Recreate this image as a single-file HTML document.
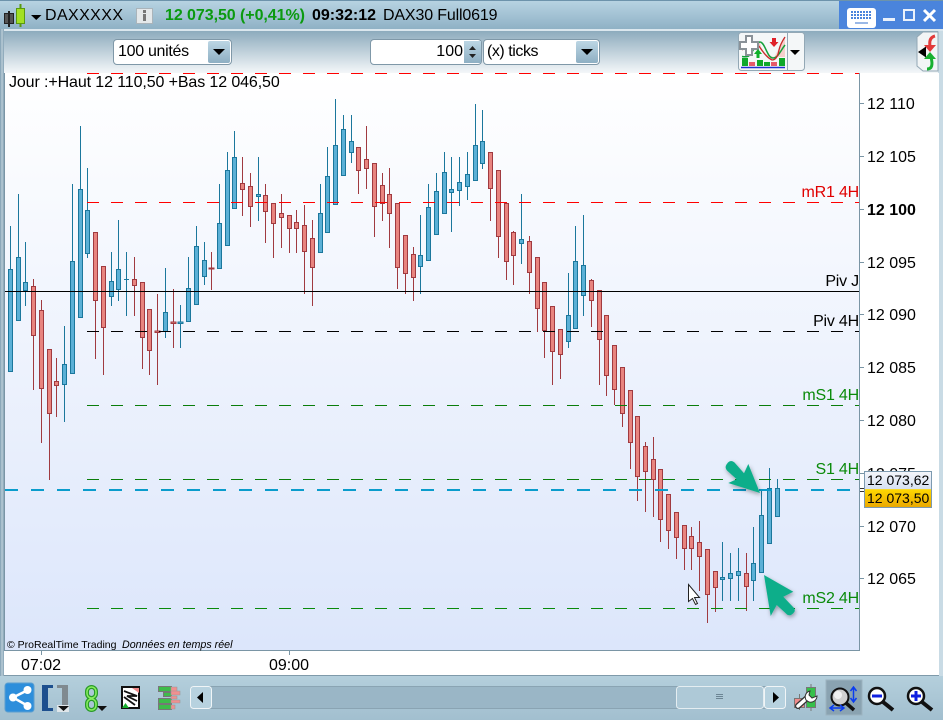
<!DOCTYPE html>
<html><head><meta charset="utf-8">
<style>
*{box-sizing:border-box}
html,body{margin:0;padding:0;width:943px;height:720px;overflow:hidden;background:#a9c5d4;font-family:"Liberation Sans",sans-serif;color:#000}
.a{position:absolute;white-space:nowrap}
#title{left:0;top:0;width:943px;height:29px;background:linear-gradient(#b7d3e2,#8fb1c5);border-top:1px solid #6d93ab}
#sep{left:0;top:29px;width:943px;height:2px;background:#dbe7ee}
#tb{left:0;top:31px;width:938px;height:42px;background:linear-gradient(#8dabbd,#f4f7f9)}
#lb{left:0;top:29px;width:4px;height:650px;background:linear-gradient(90deg,#7d9db0,#b9ccd7 50%,#84a2b4)}
#rb{left:938px;top:31px;width:5px;height:650px;background:#c9dbe5}
#white{left:4px;top:73px;width:935px;height:603px;background:#fff;border-bottom:1px solid #7f9aaa}
#chart{left:4px;top:73px;width:856px;height:578px;background:linear-gradient(#fff,#dce6fb);border-left:1px solid #7a95a5;border-right:1px solid #7a95a5;border-bottom:1px solid #7a95a5}
#bot{left:0;top:676px;width:943px;height:44px;background:linear-gradient(#b4cfdc,#a2bfcf)}
.t{font-size:16px;line-height:18px}
.p{left:867px;font-size:16px;line-height:18px}
.l{font-size:16px;line-height:18px;right:84px;letter-spacing:-.2px}
.box{background:#fff;border:1px solid #7f98a8;border-radius:4px;height:26px;top:39px;font-size:16px;line-height:24px}
.btn{width:22px;height:22px;top:41px;background:linear-gradient(#bcd6e4,#8eafc3);border-radius:2px}
.btn:after{content:"";position:absolute;left:5px;top:8px;border-left:6px solid transparent;border-right:6px solid transparent;border-top:6px solid #000}
</style></head><body>
<div class="a" id="title"></div>
<div class="a" id="sep"></div>
<div class="a" id="tb"></div>
<div class="a" id="rb"></div>
<div class="a" id="white"></div>
<div class="a" id="chart"></div>
<div class="a" id="lb"></div>
<div class="a" id="bot"></div>

<div class="a" style="left:839px;top:1px;width:104px;height:28px;background:#4a84dc"></div>
<svg class="a" style="left:0;top:0" width="943" height="30">
<rect x="4.500" y="13.500" width="9" height="10" fill="#555" stroke="#222"/><path d="M9 11v16" stroke="#222" stroke-width="2"/>
<rect x="16.500" y="8.500" width="8" height="15" fill="#a2e024" stroke="#5a9a10"/><path d="M20.500 4v4M20.500 24v3" stroke="#5a9a10" stroke-width="2"/>
<path d="M31 15h10.500l-5.250 5z"/>
<rect x="136.500" y="8.500" width="16" height="15" fill="#e4e8ea" stroke="#aab4ba"/>
<rect x="143" y="10" width="3" height="3" fill="#777"/><rect x="143" y="14" width="3" height="7" fill="#777"/>
<rect x="847" y="8" width="29" height="20" rx="3" fill="#fff"/>
<path d="M851 12h21M851 15h21M851 18h21" stroke="#4a84dc" stroke-width="2" stroke-dasharray="2 1"/><rect x="855" y="22" width="13" height="2" fill="#9ab8e6"/>
<rect x="883" y="18" width="12" height="3" fill="#eaf1fb"/>
<rect x="904" y="10" width="10" height="10" fill="none" stroke="#eaf1fb" stroke-width="2"/>
<path d="M924 10l11 11M935 10l-11 11" stroke="#fff" stroke-width="3"/>
</svg>
<div class="a t" style="left:45px;top:7px;letter-spacing:.4px">DAXXXXX</div>
<div class="a t" style="left:165px;top:7px;font-weight:bold;color:#0b9a10;letter-spacing:-.06px">12 073,50 (+0,41%)</div>
<div class="a t" style="left:312px;top:7px;font-weight:bold">09:32:12</div>
<div class="a t" style="left:383px;top:7px;letter-spacing:-.15px">DAX30 Full0619</div>

<div class="a box" style="left:113px;width:119px;padding-left:4px;letter-spacing:-.3px">100 unités</div><div class="a btn" style="left:208px"></div>
<div class="a box" style="left:370px;width:112px;text-align:right;padding-right:18px">100</div>
<div class="a" style="left:464px;top:41px;width:17px;height:22px;background:linear-gradient(#bcd6e4,#8eafc3)"></div>
<svg class="a" style="left:464px;top:41px" width="17" height="22"><path d="M5 9l3.500-4 3.500 4zM5 13l3.500 4 3.500-4z" fill="#222"/></svg>
<div class="a box" style="left:483px;width:117px;padding-left:3px;letter-spacing:-.45px">(x) ticks</div><div class="a btn" style="left:576px"></div>

<svg class="a" style="left:736px;top:31px" width="72" height="42">
<rect x="2.500" y="1.500" width="66" height="38" rx="3" fill="#f4f7f8" stroke="#93a8b5"/><path d="M51.500 1.500v38" stroke="#93a8b5"/>
<path d="M17 11C24 14 28 22 33 27c4 2 5 0 9-8l7-13v20H38C30 24 26 22 24 11z" fill="#f5cfcc"/>
<path d="M6 25.500C10 26 12 26 14 24 18 19 20 11 24 11c5 0 7 16 13 16 5 0 8-8 12-13" fill="none" stroke="#14a03a" stroke-width="1.500"/>
<path d="M6 19C10 15 13 11 17 11c6 0 10 14 19 18 4 0 6-4 7-10 1-5 4-10 6-13" fill="none" stroke="#c82a2a" stroke-width="1.300"/>
<path d="M4 11h6V5h6v6h6v7h-6v6h-6v-6H4z" fill="#fff" stroke="#8a9298" stroke-width="2"/>
<path d="M36 7h4v4h2.500L38 16l-4.500-5H36z" fill="#e0222a"/>
<path d="M20.500 27v-4H18l4-5 4 5h-2.500v4z" fill="#0fb02a"/>
<path d="M6 27h6v8H6zM21 29h6v6h-6zM28 31h6v4h-6zM43 27h6v8h-6z" fill="#0fa82a"/>
<path d="M13 31h6v4h-6zM35 31h6v4h-6z" fill="#e65a6a"/>
<path d="M5 36.500h44" stroke="#2030d0" stroke-width="1.500"/>
<path d="M54 19h10l-5 5z"/>
</svg>
<svg class="a" style="left:913px;top:31px" width="26" height="42">
<path d="M25 1H10L4 6v29l6 5h15z" fill="#f2f5f6" stroke="#93a8b5"/>
<path d="M22 5c-4 1-6 4-5 10" fill="none" stroke="#e23a3a" stroke-width="3"/><path d="M11 14h12l-6 7z" fill="#e23a3a"/>
<path d="M14 38c5 0 6-4 4-12" fill="none" stroke="#18b030" stroke-width="3"/><path d="M11 28l6-7 6 7z" fill="#18b030"/>
<path d="M5 21l8-5.500v11z"/>
</svg>

<svg class="a" style="left:0;top:0" width="943" height="720" shape-rendering="crispEdges">
<path fill="none" stroke="#1b779c" d="M10.500 226V371M18.500 194V320M25.500 242V306M64.500 326V422M72.500 184V373M80.500 126V317M87.500 168V258M111.500 252V306M118.500 220V301M126.500 252V316M165.500 268V338M180.500 305V348M188.500 257V321M196.500 226V304M204.500 242V285M219.500 184V268M227.500 152V245M234.500 131V208M258.500 157V221M320.500 184V252M327.500 147V232M335.500 99V204M343.500 115V175M351.500 115V163M420.500 215V294M428.500 184V260M436.500 173V234M444.500 152V213M451.500 157V232M459.500 157V206M467.500 152V200M475.500 104V180M482.500 110V169M521.500 194V264M568.500 273V348M575.500 226V328M583.500 215V316M722.500 542V601M730.500 553V601M738.500 548V601M753.500 527V601M761.500 490V572M769.500 468V543M777.500 479V516"/>
<path fill="#5bb0d6" stroke="#1b779c" d="M8.500 269.500h4V371.500h-4zM16.500 257.500h4V320.500h-4zM23.500 282.500h4V290.500h-4zM62.500 364.500h4V384.500h-4zM70.500 261.500h4V373.500h-4zM78.500 189.500h4V317.500h-4zM85.500 210.500h4V253.500h-4zM109.500 281.500h4V296.500h-4zM116.500 269.500h4V289.500h-4zM124 279.500h5M163.500 312.500h4V331.500h-4zM178 322h5v1.500h-5zM186.500 288.500h4V321.500h-4zM194.500 246.500h4V304.500h-4zM202.500 260.500h4V276.500h-4zM217.500 223.500h4V268.500h-4zM225.500 170.500h4V245.500h-4zM232.500 157.500h4V208.500h-4zM256.500 194.500h4V196.500h-4zM318.500 213.500h4V252.500h-4zM325.500 176.500h4V232.500h-4zM333.500 145.500h4V204.500h-4zM341.500 129.500h4V175.500h-4zM349.500 141.500h4V152.500h-4zM418.500 255.500h4V266.500h-4zM426.500 207.500h4V260.500h-4zM434.500 191.500h4V234.500h-4zM442.500 172.500h4V213.500h-4zM449.500 189.500h4V192.500h-4zM457.500 182.500h4V190.500h-4zM465.500 174.500h4V186.500h-4zM473.500 145.500h4V180.500h-4zM480.500 141.500h4V163.500h-4zM519.500 239.500h4V243.500h-4zM566.500 315.500h4V341.500h-4zM573.500 261.500h4V328.500h-4zM581.500 265.500h4V295.500h-4zM720.500 577.500h4V579.500h-4zM728.500 573.500h4V578.500h-4zM736.500 571.500h4V575.500h-4zM751.500 563.500h4V580.500h-4zM759.500 515.500h4V572.500h-4zM767.500 488.500h4V543.500h-4zM775.500 488.500h4V516.500h-4z"/>
<path fill="none" stroke="#a03a40" d="M33.500 279V390M41.500 300V443M49.500 349V480M56.500 358V417M95.500 232V359M103.500 266V375M134.500 257V316M142.500 282V369M149.500 309V375M157.500 294V385M173.500 289V348M211.500 252V290M242.500 157V216M250.500 173V227M265.500 184V243M273.500 203V258M281.500 194V248M289.500 215V253M296.500 210V253M304.500 205V294M312.500 220V306M358.500 147V194M366.500 126V189M374.500 163V237M382.500 173V221M389.500 168V248M397.500 203V289M405.500 235V294M413.500 247V301M490.500 152V221M498.500 170V258M506.500 203V280M513.500 231V285M529.500 236V294M537.500 257V332M544.500 282V358M552.500 306V385M560.500 329V379M591.500 279V327M599.500 290V385M606.500 315V396M614.500 345V405M622.500 367V427M630.500 390V469M637.500 416V501M645.500 442V512M653.500 437V517M660.500 469V542M668.500 494V549M676.500 512V559M684.500 525V570M691.500 527V570M699.500 521V591M707.500 549V623M715.500 571V612M746.500 553V611"/>
<path fill="#e8847f" stroke="#a03a40" d="M31.500 286.500h4V335.500h-4zM39.500 310.500h4V388.500h-4zM47.500 349.500h4V413.500h-4zM54.500 381.500h4V385.500h-4zM93.500 232.500h4V300.500h-4zM101.500 266.500h4V327.500h-4zM132.500 279.500h4V285.500h-4zM140.500 282.500h4V337.500h-4zM147.500 309.500h4V350.500h-4zM155 331h5v1.500h-5zM171 322h5v1.500h-5zM209 268h5v1h-5zM240.500 183.500h4V189.500h-4zM248.500 186.500h4V206.500h-4zM263.500 195.500h4V211.500h-4zM271.500 203.500h4V223.500h-4zM279.500 213.500h4V217.500h-4zM287.500 215.500h4V228.500h-4zM294.500 222.500h4V228.500h-4zM302.500 225.500h4V251.500h-4zM310.500 238.500h4V267.500h-4zM356.500 147.500h4V170.500h-4zM364.500 159.500h4V168.500h-4zM372.500 163.500h4V206.500h-4zM380.500 185.500h4V203.500h-4zM387.500 194.500h4V213.500h-4zM395.500 203.500h4V267.500h-4zM403.500 235.500h4V273.500h-4zM411.500 254.500h4V277.500h-4zM488.500 152.500h4V188.500h-4zM496.500 170.500h4V236.500h-4zM504.500 203.500h4V261.500h-4zM511.500 232.500h4V255.500h-4zM527.500 241.500h4V272.500h-4zM535.500 257.500h4V308.500h-4zM542.500 282.500h4V330.500h-4zM550.500 306.500h4V351.500h-4zM558.500 329.500h4V354.500h-4zM589.500 280.500h4V300.500h-4zM597.500 290.500h4V339.500h-4zM604.500 315.500h4V375.500h-4zM612.500 345.500h4V389.500h-4zM620.500 367.500h4V413.500h-4zM628.500 390.500h4V442.500h-4zM635.500 416.500h4V476.500h-4zM643.500 446.500h4V471.500h-4zM651.500 459.500h4V479.500h-4zM658.500 469.500h4V519.500h-4zM666.500 494.500h4V530.500h-4zM674.500 512.500h4V537.500h-4zM682.500 525.500h4V548.500h-4zM689.500 536.500h4V548.500h-4zM697.500 542.500h4V556.500h-4zM705.500 549.500h4V594.500h-4zM713.500 571.500h4V587.500h-4zM744.500 573.500h4V586.500h-4z"/>
<path d="M87 73.500H859" stroke="#f00" stroke-dasharray="12 12"/>
<path d="M87 202.500H859" stroke="#f00" stroke-dasharray="12 12"/>
<path d="M5 291.500H859" stroke="#000"/>
<path d="M87 331.500H859" stroke="#000" stroke-dasharray="12 12"/>
<path d="M87 405.500H859" stroke="#0a7d0a" stroke-dasharray="12 12"/>
<path d="M87 479.500H859" stroke="#0a7d0a" stroke-dasharray="12 12"/>
<path d="M87 608.500H859" stroke="#0a8a0a" stroke-dasharray="12 12"/>
<path d="M5 490H859" stroke="#0a9ccc" stroke-width="2" stroke-dasharray="13 13"/>
<path d="M860 103.500h4M860 156.500h4M860 209.500h4M860 262.500h4M860 314.500h4M860 367.500h4M860 420.500h4M860 473.500h4M860 526.500h4M860 578.500h4M41.500 651v4M289.500 651v4" stroke="#7a95a5"/>
<path d="M860 488.500h5M860 491.500h5" stroke="#333"/>
</svg>

<svg class="a" style="left:680px;top:455px" width="130" height="175">
<defs><filter id="s" x="-30%" y="-30%" width="160%" height="160%"><feDropShadow dx="1" dy="2" stdDeviation="2" flood-color="#000" flood-opacity=".35"/></filter></defs>
<path d="M8.500 129.500v17l4-3 3 6 2-1-3-6h5z" fill="#fff" stroke="#222" stroke-width="1"/>
<g filter="url(#s)" fill="#0bae8a">
<path d="M80 38L68.300 9 64 18.300 54.500 7.500Q51 4.500 48 7.500L46.500 9.500Q44.500 12.500 47 15.500L56.700 24.300 48.300 28z"/>
<path d="M84 120L113.300 136.700 103.300 141.700 114 153Q116 156 113 158.500L111 160Q108 161 106 158.500L96.700 150 90.700 161z"/>
</g>
</svg>

<div class="a t" style="left:9px;top:74px;letter-spacing:-.11px">Jour :+Haut 12 110,50 +Bas 12 046,50</div>
<div class="a" style="left:7px;top:639px;font-size:10.500px;line-height:13px">© ProRealTime Trading</div>
<div class="a" style="left:122px;top:639px;font-size:10.700px;line-height:13px;font-style:italic">Données en temps réel</div>
<div class="a l" style="top:184px;color:#e00000">mR1 4H</div>
<div class="a l" style="top:273px">Piv J</div>
<div class="a l" style="top:313px">Piv 4H</div>
<div class="a l" style="top:387px;color:#0a8a0a">mS1 4H</div>
<div class="a l" style="top:461px;color:#0a8a0a">S1 4H</div>
<div class="a l" style="top:590px;color:#0a8a0a">mS2 4H</div>
<div class="a p" style="top:96px">12 110</div>
<div class="a p" style="top:149px">12 105</div>
<div class="a p" style="top:202px;font-weight:bold">12 100</div>
<div class="a p" style="top:255px">12 095</div>
<div class="a p" style="top:307px">12 090</div>
<div class="a p" style="top:360px">12 085</div>
<div class="a p" style="top:413px">12 080</div>
<div class="a p" style="top:466px">12 075</div>
<div class="a p" style="top:519px">12 070</div>
<div class="a p" style="top:571px">12 065</div>
<div class="a" style="left:864px;top:471px;width:68px;height:37px;border:1px solid #7d9ab0;background:linear-gradient(#f4f6fb,#d6e0f2 48%,#ffd800 50%,#eaa800);font-size:14px;line-height:17.500px;padding-left:2px"><div>12 073,62</div><div>12 073,50</div></div>
<div class="a t" style="left:21px;top:657px">07:02</div>
<div class="a t" style="left:269px;top:657px">09:00</div>

<svg class="a" style="left:0;top:676px" width="943" height="44">
<rect x="5" y="7" width="29" height="29" rx="3" fill="#2d8edb" stroke="#5a9ed0"/>
<path d="M28 14L13 21.500 28 30" fill="none" stroke="#fff" stroke-width="2.500"/><circle cx="27.500" cy="14" r="4" fill="#fff"/><circle cx="13" cy="21.500" r="4" fill="#fff"/><circle cx="27.500" cy="30" r="4" fill="#fff"/>
<path d="M53 9H42v26h11v-3h-5V12h5z" fill="#1d4f8e"/>
<path d="M57 9h11v26H57v-3h5V12h-5z" fill="#808a90"/>
<rect x="57" y="29" width="12" height="7" fill="#dfe6ea"/><path d="M58 30h11l-5.500 5z" fill="#111"/>
<g fill="none"><rect x="87" y="11" width="9" height="11" rx="4.500" stroke="#2a9a2a" stroke-width="4"/><rect x="87" y="23" width="9" height="11" rx="4.500" stroke="#2a9a2a" stroke-width="4"/><rect x="87" y="11" width="9" height="11" rx="4.500" stroke="#8af060" stroke-width="1.500"/><rect x="87" y="23" width="9" height="11" rx="4.500" stroke="#8af060" stroke-width="1.500"/></g>
<path d="M97 30h10l-5 5z" fill="#111"/>
<rect x="122" y="11" width="17" height="21" fill="#fff" stroke="#111" stroke-width="2"/>
<path d="M124 15l13 5-10 0 10 5M124 21l11 8" fill="none" stroke="#111" stroke-width="1.800"/>
<path d="M132 12h7v5z" fill="#ef8a8a"/><path d="M122 32h7l-3.500-5z" fill="#18b030"/>
<path d="M158.500 10.500h13v5h-13zM163.500 16.500h8v4h-8zM158.500 22.500h13v5h-13zM158.500 28.500h13v5h-13z" fill="#3ebc4a" stroke="#777" stroke-width="1"/>
<path d="M171 11h6v4h-6zM171 15h9v4h-9zM171 20h6v3h-6zM171 24h9v3h-9zM171 29h4v4h-4z" fill="#f09090" stroke="#999" stroke-width=".600"/>
<rect x="190.500" y="10.500" width="595" height="22" rx="3" fill="#9ab6c6" stroke="#8aa4b3"/>
<rect x="190.500" y="10.500" width="21" height="22" rx="3" fill="#b7d2df" stroke="#f0f5f7"/>
<path d="M203 16v11l-6-5.500z"/>
<rect x="676.500" y="10.500" width="87" height="22" rx="3" fill="#aec9d7" stroke="#e4edf1"/>
<path d="M716 18.500h7M716 20.500h7M716 22.500h7" stroke="#6c8594"/>
<rect x="764.500" y="10.500" width="21" height="22" rx="3" fill="#b7d2df" stroke="#f0f5f7"/>
<path d="M773 16v11l6-5.500z"/>
<rect x="794.500" y="22.500" width="10" height="9" fill="#f08a8a" stroke="#777"/><path d="M799.500 18v4M799.500 32v2" stroke="#777"/>
<rect x="806.500" y="11.500" width="9" height="20" fill="#35c04a" stroke="#777"/><path d="M811 8v3M811 32v3" stroke="#777"/>
<path d="M798 30l9-8" stroke="#333" stroke-width="6" stroke-linecap="round"/><path d="M798 30l9-8" stroke="#fff" stroke-width="3.500" stroke-linecap="round"/>
<path d="M806 24c-2-4 0-8 4-9l-1 4 3 3 5-2c0 4-4 7-8 6z" fill="#fff" stroke="#333"/>
<rect x="826" y="4" width="36" height="35" fill="#8aa3b1" stroke="#9cb3c0"/>
<circle cx="840" cy="21" r="8.500" fill="#d0d0d0" stroke="#111" stroke-width="2"/><circle cx="838" cy="19" r="4" fill="#f0f0f0"/>
<path d="M846 27l8 7" stroke="#111" stroke-width="3.500"/>
<path d="M853.500 11v15M850.500 15l3-4 3 4M850.500 22l3 4 3-4M830 32h14M834 29l-4 3 4 3M840 29l4 3-4 3" fill="none" stroke="#0a3cf0" stroke-width="1.500"/>
<circle cx="877" cy="20" r="8" fill="#fff" stroke="#111" stroke-width="2.500"/><path d="M872 20h10" stroke="#1020e0" stroke-width="3"/><path d="M883 26l10 8" stroke="#111" stroke-width="4"/>
<circle cx="916" cy="20" r="8" fill="#fff" stroke="#111" stroke-width="2.500"/><path d="M911 20h10M916 15v10" stroke="#1020e0" stroke-width="3"/><path d="M922 26l10 8" stroke="#111" stroke-width="4"/>
</svg>
</body></html>
